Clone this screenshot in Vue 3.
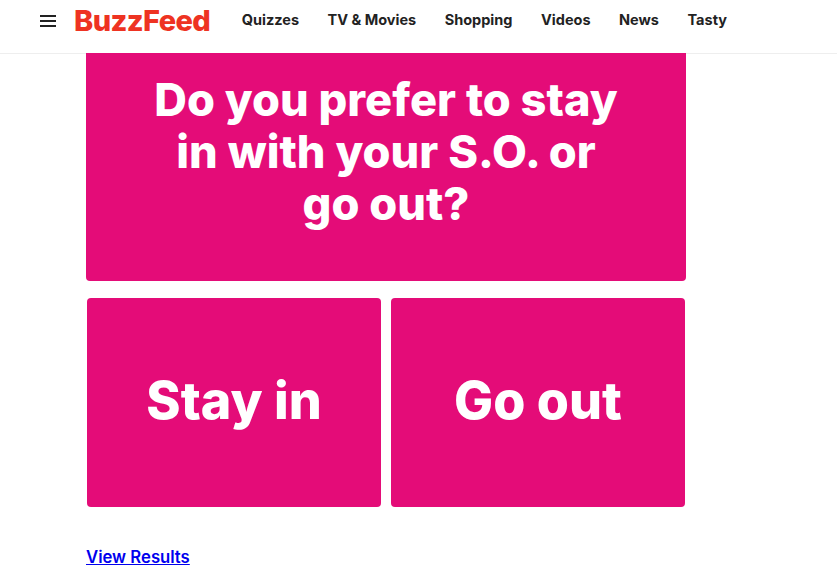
<template>
  <div class="page">
    <header class="topbar">
      <button class="menu" aria-label="Menu">
        <svg width="16" height="12" viewBox="0 0 16 12">
          <path d="M0 1h16M0 6h16M0 11h16" stroke="#222" stroke-width="1.8" fill="none" />
        </svg>
      </button>
      <a class="logo">BuzzFeed</a>
      <nav class="nav">
        <a v-for="item in navItems" :key="item">{{ item }}</a>
      </nav>
    </header>

    <main class="quiz">
      <div class="question">
        <h1>Do you prefer to stay<br />in with your S.O. or<br />go out?</h1>
      </div>
      <div class="answers">
        <div v-for="answer in answers" :key="answer" class="answer">{{ answer }}</div>
      </div>
      <a class="results" href="#">View Results</a>
    </main>
  </div>
</template>

<script setup>
const navItems = ['Quizzes', 'TV & Movies', 'Shopping', 'Videos', 'News', 'Tasty']
const answers = ['Stay in', 'Go out']
</script>

<style>
html,
body {
  margin: 0;
  background: #fff;
  overflow: hidden;
}
</style>

<style scoped>
.page {
  width: 837px;
  height: 581px;
  overflow: hidden;
  font-family: Inter, "Liberation Sans", sans-serif;
}

.topbar {
  display: flex;
  align-items: flex-start;
  height: 53px;
  border-bottom: 1px solid #eeeeee;
}

.menu {
  margin: 15px 0 0 40px;
  padding: 0;
  border: 0;
  background: none;
  display: flex;
}

.logo {
  margin: 3px 0 0 18px;
  font-size: 29px;
  line-height: 36px;
  font-weight: 800;
  letter-spacing: -0.6px;
  color: #ee3322;
}

.nav {
  display: flex;
  gap: 28.5px;
  margin: 11px 0 0 31.5px;
  font-size: 14.5px;
  line-height: 18px;
  font-weight: 700;
  color: #222;
}

.quiz {
  margin-top: -1px;
  width: 600px;
  margin-left: 86px;
}

.question {
  height: 228px;
  background: #e40c78;
  border-radius: 0 0 4px 4px;
  color: #fff;
  text-align: center;
  box-sizing: border-box;
  padding-top: 21px;
}

.question h1 {
  margin: 0;
  font-size: 45.2px;
  line-height: 52px;
  font-weight: 800;
}

.answers {
  display: flex;
  gap: 10px;
  margin: 17px 1px 0;
}

.answer {
  flex: 1;
  height: 209px;
  box-sizing: border-box;
  padding-bottom: 5px;
  display: flex;
  align-items: center;
  justify-content: center;
  background: #e40c78;
  border-radius: 4px;
  color: #fff;
  font-size: 52px;
  font-weight: 800;
}

.results {
  display: block;
  margin-top: 40px;
  width: max-content;
  color: #0000ee;
  font-size: 16.7px;
  line-height: 20px;
  font-weight: 600;
  text-decoration: underline;
}
</style>
